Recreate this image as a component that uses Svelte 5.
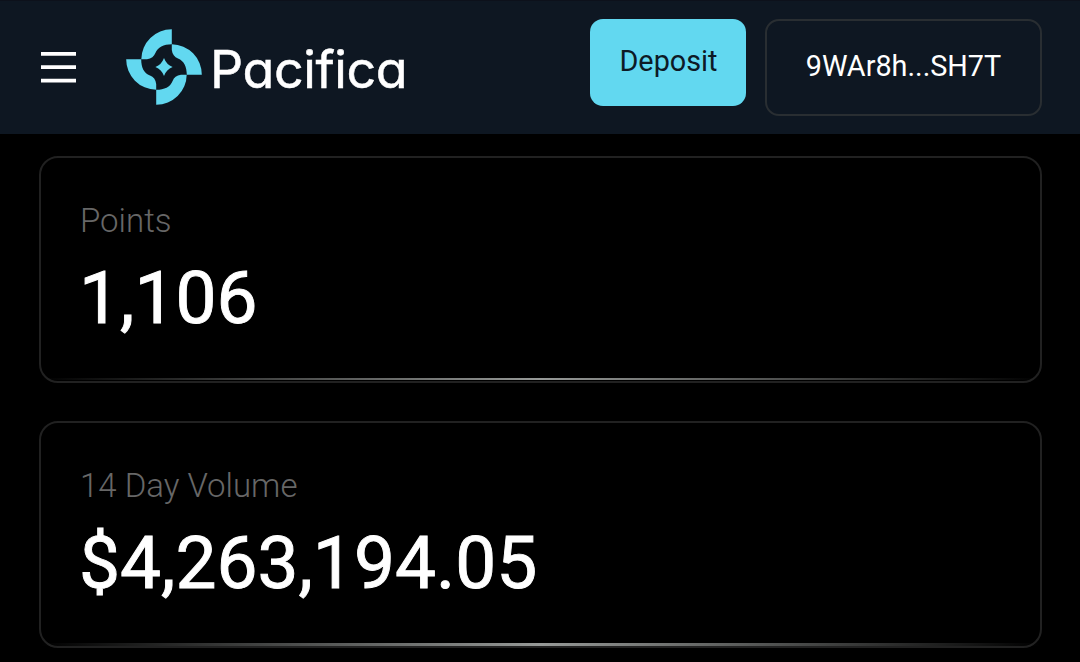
<script lang="ts">
  type Stat = {
    label: string;
    value: string;
    glow: 'raised' | 'flush';
  };

  const address = '9WAr8h...SH7T';

  const stats: Stat[] = [
    { label: 'Points', value: '1,106', glow: 'raised' },
    { label: '14 Day Volume', value: '$4,263,194.05', glow: 'flush' },
  ];

  // One petal, rotated around the center to build the logo mark
  const petal =
    'M7.8 -37.8 A30.3 30.3 0 0 0 -22.7 -7.8 H-17 C-12.5 -8.3 -10 -10.5 -8.6 -14 C-6.2 -20 -0.5 -22.8 7.8 -22.8 Z';
</script>

<header class="topbar">
  <button class="menu" aria-label="Menu">
    <svg viewBox="0 0 35 31" aria-hidden="true">
      <path d="M0 1.9 H35 M0 15.2 H35 M0 28.7 H35" />
    </svg>
  </button>

  <div class="brand">
    <svg class="mark" viewBox="-38 -38 76 76" aria-hidden="true">
      {#each [0, 90, 180, 270] as angle (angle)}
        <path d={petal} transform="rotate({angle})" />
      {/each}
      <path d="M0 -9 Q2.4 -2.4 8.6 0 Q2.4 2.4 0 9 Q-2.4 2.4 -8.6 0 Q-2.4 -2.4 0 -9 Z" />
    </svg>
    <span class="name">Pacifica</span>
  </div>

  <div class="actions">
    <button class="deposit">Deposit</button>
    <button class="wallet">{address}</button>
  </div>
</header>

<main>
  {#each stats as stat (stat.label)}
    <section class="card {stat.glow}">
      <div class="label">{stat.label}</div>
      <div class="value">{stat.value}</div>
    </section>
  {/each}
</main>

<style>
  :global(body) {
    background: #000;
    font-family: Roboto, sans-serif;
    overflow: hidden;
  }

  button {
    font: inherit;
    border: none;
    background: none;
    padding: 0;
  }

  .topbar {
    box-sizing: border-box;
    display: flex;
    align-items: flex-start;
    height: 134px;
    padding: 18px 38px 0 41px;
    border-top: 1px solid #0d111b;
    background: #0e1722;
  }

  .menu {
    width: 35px;
    height: 31px;
    margin-top: 33px;
  }

  .menu svg {
    display: block;
    stroke: #fff;
    stroke-width: 3.7px;
  }

  .brand {
    display: flex;
    margin: 10px 0 0 50px;
  }

  .mark {
    width: 76px;
    height: 76px;
    fill: #62d8f0;
  }

  .name {
    margin: 9px 0 0 8px;
    font-family: Inter, sans-serif;
    font-size: 52px;
    font-weight: 400;
    line-height: 64px;
    letter-spacing: -0.4px;
    font-feature-settings: 'cv11';
    color: #fff;
    -webkit-text-stroke: 0.5px #fff;
  }

  .actions {
    display: flex;
    align-items: flex-start;
    gap: 19px;
    margin-left: auto;
  }

  .deposit {
    width: 156px;
    height: 87px;
    padding: 0 0 3px 1px;
    border-radius: 13px;
    background: #62d8f0;
    color: #0d1a26;
    font-size: 28.8px;
  }

  .wallet {
    box-sizing: border-box;
    width: 277px;
    height: 97px;
    padding-bottom: 3px;
    border: 2px solid #292e32;
    border-radius: 14px;
    color: #fff;
    font-size: 28.8px;
  }

  main {
    display: flex;
    flex-direction: column;
    gap: 38px;
    padding: 22px 38px 0 39px;
  }

  .card {
    box-sizing: border-box;
    position: relative;
    height: 227px;
    padding: 43px 39px 0;
    border: 2px solid #212121;
    border-radius: 19px;
  }

  /* Highlight fading out towards both corners */
  .card::after {
    content: '';
    position: absolute;
    left: 0;
    right: 0;
    bottom: 1px;
    height: 2px;
    background: linear-gradient(90deg, transparent, #979a98, transparent);
  }

  .card.flush::after {
    bottom: 0;
    height: 3px;
  }

  .label {
    color: #676767;
    font-size: 33px;
    font-weight: 300;
    line-height: 39px;
  }

  .value {
    margin: 15px 0 0 -1px;
    color: #fff;
    font-size: 73px;
    font-weight: 400;
    line-height: 86px;
    -webkit-text-stroke: 0.9px #fff;
  }
</style>
